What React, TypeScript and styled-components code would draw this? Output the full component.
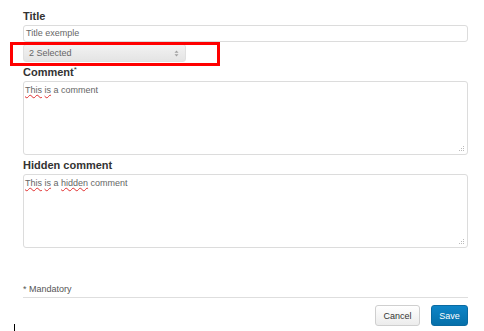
import styled, { createGlobalStyle } from "styled-components";
import { FC } from "react";

const GlobalStyle = createGlobalStyle`
  html, body {
    margin: 0;
    padding: 0;
    background: #fff;
  }
  body {
    font-family: "Liberation Sans", Arial, sans-serif;
    width: 484px;
    height: 331px;
    overflow: hidden;
    position: relative;
  }
`;

const Misspelled: FC<{ text: string }> = ({ text }) => <Squiggle>{text}</Squiggle>;

const SelectArrows = () => (
  <svg width="5" height="7" viewBox="0 0 5 7">
    <path d="M2.5 0.5 L4.5 2.8 H0.5 Z" fill="#a0a0a0" />
    <path d="M2.5 6.5 L4.5 4.2 H0.5 Z" fill="#a0a0a0" />
  </svg>
);

const Grip = () => (
  <GripIcon width="6" height="6" viewBox="0 0 6 6">
    <rect x="4" y="0" width="1" height="1" fill="#bbb" />
    <rect x="2" y="2" width="1" height="1" fill="#bbb" />
    <rect x="4" y="2" width="1" height="1" fill="#bbb" />
    <rect x="0" y="4" width="1" height="1" fill="#bbb" />
    <rect x="2" y="4" width="1" height="1" fill="#bbb" />
    <rect x="4" y="4" width="1" height="1" fill="#bbb" />
  </GripIcon>
);

const App = () => {
  return (
    <>
      <GlobalStyle />
      <Form>
        <Label>Title</Label>
        <Input>Title exemple</Input>
        <Select>
          <span>2 Selected</span>
          <SelectArrows />
        </Select>
        <Label $top={3}>
          Comment<sup>*</sup>
        </Label>
        <TextArea>
          <Misspelled text="This" /> <Misspelled text="is" /> a comment
          <Grip />
        </TextArea>
        <Label $top={3}>Hidden comment</Label>
        <TextArea>
          <Misspelled text="This" /> <Misspelled text="is" /> a <Misspelled text="hidden" /> comment
          <Grip />
        </TextArea>
        <Mandatory>* Mandatory</Mandatory>
        <Actions>
          <Button $width={45}>Cancel</Button>
          <Button $width={37} $primary>
            Save
          </Button>
        </Actions>
        <Highlight />
      </Form>
      <Caret />
    </>
  );
};

const Form = styled.form`
  position: relative;
  display: flex;
  flex-direction: column;
  width: 445px;
  margin-left: 23px;
  padding-top: 9px;
`;

const Label = styled.label<{ $top?: number }>`
  display: block;
  margin-top: ${(p) => p.$top ?? 0}px;
  margin-bottom: 2px;
  font-size: 11px;
  line-height: 14px;
  font-weight: bold;
  color: #333;

  sup {
    font-size: 8px;
    font-weight: normal;
    vertical-align: top;
    line-height: 10px;
  }
`;

const Input = styled.div`
  box-sizing: border-box;
  height: 17px;
  padding: 0 2px;
  border: 1px solid #dcdcdc;
  border-radius: 3px;
  font-size: 9px;
  line-height: 15px;
  color: #666;
  background: #fff;
`;

const Select = styled.div`
  box-sizing: border-box;
  display: flex;
  align-items: center;
  justify-content: space-between;
  width: 163px;
  height: 18px;
  margin-top: 2px;
  padding: 0 6px 0 5px;
  border: 1px solid #e0e0e0;
  border-radius: 3px;
  background: linear-gradient(#f2f2f2, #e4e4e4);
  font-size: 9px;
  color: #666;
`;

const TextArea = styled.div`
  position: relative;
  box-sizing: border-box;
  height: 74px;
  padding: 2px 1px;
  border: 1px solid #dcdcdc;
  border-radius: 3px;
  font-size: 9px;
  line-height: 12px;
  color: #666;
  background: #fff;
`;

const Squiggle = styled.span`
  text-decoration: underline wavy #e03030;
  text-decoration-thickness: 1px;
  text-underline-offset: 1px;
`;

const GripIcon = styled.svg`
  position: absolute;
  right: 2px;
  bottom: 2px;
`;

const Mandatory = styled.div`
  margin-top: 36px;
  padding-bottom: 2px;
  border-bottom: 1px solid #dedede;
  font-size: 9px;
  line-height: 11px;
  color: #555;
`;

const Actions = styled.div`
  display: flex;
  justify-content: flex-end;
  gap: 11px;
  margin-top: 7px;
`;

const Button = styled.button<{ $primary?: boolean; $width: number }>`
  box-sizing: border-box;
  width: ${(p) => p.$width}px;
  height: 21px;
  padding: 0;
  border-radius: 3px;
  font-family: "Liberation Sans", Arial, sans-serif;
  font-size: 9px;
  cursor: pointer;
  border: 1px solid ${(p) => (p.$primary ? "#0a6aa1" : "#cfcfcf")};
  color: ${(p) => (p.$primary ? "#fff" : "#333")};
  background: ${(p) =>
    p.$primary ? "linear-gradient(#0e85c7, #0670aa)" : "linear-gradient(#ffffff, #ececec)"};
`;

const Highlight = styled.div`
  position: absolute;
  left: -13px;
  top: 42px;
  width: 210px;
  height: 24px;
  box-sizing: border-box;
  border: 3px solid #ff0000;
  pointer-events: none;
`;

const Caret = styled.div`
  position: absolute;
  left: 14px;
  top: 324px;
  width: 1px;
  height: 7px;
  background: #000;
`;

export default App;
